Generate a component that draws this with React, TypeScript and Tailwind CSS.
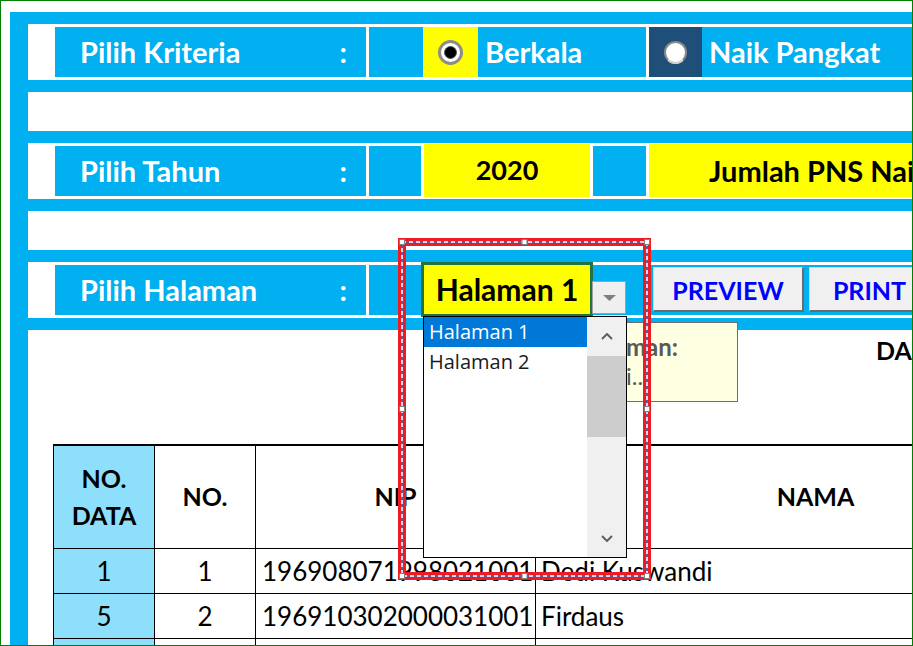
import React from "react";

const BLUE = "bg-[#00b0f0]";

function LabelCell({ label }: { label: string }) {
  return (
    <div className={`w-[311px] shrink-0 ${BLUE} flex items-center justify-between pl-[25px] pr-[19px] text-white font-bold text-[29px]`}>
      <span>{label}</span>
      <span>:</span>
    </div>
  );
}

function LabelGroup({ label }: { label: string }) {
  return (
    <div className="flex shrink-0 border-[3px] border-white">
      <LabelCell label={label} />
      <div className="w-[3px] bg-white" />
      <div className={`w-[52px] ${BLUE}`} />
    </div>
  );
}

function Band() {
  return <div className={`h-[12px] shrink-0 ${BLUE}`} />;
}

function Chevron({ up }: { up?: boolean }) {
  return (
    <svg width="12" height="7" viewBox="0 0 12 7">
      <polyline
        points={up ? "1,6 6,1 11,6" : "1,1 6,6 11,1"}
        fill="none"
        stroke="#606060"
        strokeWidth="2"
      />
    </svg>
  );
}

const rows = [
  { data: "1", no: "1", nip: "196908071998021001", nama: "Dedi Kuswandi" },
  { data: "5", no: "2", nip: "196910302000031001", nama: "Firdaus" },
  { data: "", no: "", nip: "", nama: "" },
];

const handles: [number, number][] = [
  [5, 5], [127.5, 5], [250, 5],
  [5, 172], [250, 172],
  [5, 339], [127.5, 339], [250, 339],
];

export default function App() {
  return (
    <div className="w-[913px] h-[646px] border border-[#008000] bg-white font-['Lato',sans-serif] text-black">
      <div className="relative w-full h-full overflow-hidden">
        <div className="flex h-full pt-[11px] pl-[9px]">
          <div className={`w-[18px] shrink-0 ${BLUE}`} />
          <div className="flex-1 min-w-0 flex flex-col">
            <Band />

            {/* Pilih Kriteria */}
            <div className="flex h-[56px] shrink-0">
              <div className="w-[24px] shrink-0" />
              <div className="flex shrink-0 border-[3px] border-white">
                <LabelCell label="Pilih Kriteria" />
                <div className="w-[3px] bg-white" />
                <div className={`w-[54px] ${BLUE}`} />
                <div className="w-[55px] bg-[#ffff00] flex items-center justify-center">
                  <div className="w-[25px] h-[25px] rounded-full border-[3px] border-[#8c8c8c] bg-white flex items-center justify-center">
                    <div className="w-[13px] h-[13px] rounded-full bg-black border border-[#555]" />
                  </div>
                </div>
                <div className={`w-[168px] ${BLUE} flex items-center pl-[7px] text-white font-bold text-[29px]`}>
                  Berkala
                </div>
              </div>
              <div className="flex flex-1 min-w-0 border-y-[3px] border-white">
                <div className="w-[53px] shrink-0 bg-[#1f4e79] flex items-center justify-center">
                  <div className="w-[23px] h-[23px] rounded-full border-2 border-[#8a8a8a] border-b-[#d0d0d0] bg-white" />
                </div>
                <div className={`flex-1 ${BLUE} flex items-center pl-[7px] text-white font-bold text-[29px] whitespace-nowrap`}>
                  Naik Pangkat
                </div>
              </div>
            </div>

            <Band />
            <div className="h-[39px] shrink-0" />
            <Band />

            {/* Pilih Tahun */}
            <div className="flex h-[56px] shrink-0">
              <div className="w-[24px] shrink-0" />
              <LabelGroup label="Pilih Tahun" />
              <div className="w-[166px] shrink-0 mt-px mb-[2px] bg-[#ffff00] flex items-center justify-center font-bold text-[27px]">
                2020
              </div>
              <div className={`w-[59px] shrink-0 border-[3px] border-white ${BLUE}`} />
              <div className="flex-1 min-w-0 mt-px mb-[2px] bg-[#ffff00] flex items-center pl-[60px] font-bold text-[29px] whitespace-nowrap overflow-hidden">
                Jumlah PNS Naik Gaji Berkala
              </div>
            </div>

            <Band />
            <div className="h-[39px] shrink-0" />
            <Band />

            {/* Pilih Halaman */}
            <div className="flex h-[56px] shrink-0">
              <div className="w-[24px] shrink-0" />
              <LabelGroup label="Pilih Halaman" />
              <div className={`flex flex-1 min-w-0 border-y-[3px] border-white ${BLUE} pl-[229px] gap-[5px]`}>
                <button className="w-[151px] h-[45px] mt-[2px] pt-[3px] shrink-0 bg-[#f0f0f0] border-t border-l border-[#d4d4d4] border-r-2 border-b-2 border-r-[#6b6b6b] border-b-[#6b6b6b] text-[#0000ff] font-bold text-[25px]">
                  PREVIEW
                </button>
                <button className="w-[122px] h-[45px] mt-[2px] pt-[3px] shrink-0 bg-[#f0f0f0] border-t border-l border-[#d4d4d4] border-r-2 border-b-2 border-r-[#6b6b6b] border-b-[#6b6b6b] text-[#0000ff] font-bold text-[25px]">
                  PRINT
                </button>
              </div>
            </div>

            <Band />

            {/* title */}
            <div className="h-[114px] shrink-0 pl-[848px] pt-[5px] font-bold text-[25px] leading-[30px] whitespace-nowrap">
              DAFTAR PNS NAIK GAJI BERKALA
            </div>

            {/* table */}
            <div className="ml-[25px] grid grid-cols-[101px_101px_280px_560px] border-t-2 border-l border-black w-max">
              <div className="h-[103px] bg-[#8ddffc] border-r border-b border-black flex items-center justify-center text-center font-bold text-[25px] leading-[37px]">
                NO.<br />DATA
              </div>
              <div className="h-[103px] border-r border-b border-black flex items-center justify-center font-bold text-[25px]">
                NO.
              </div>
              <div className="h-[103px] border-r border-b border-black flex items-center justify-center font-bold text-[25px]">
                NIP
              </div>
              <div className="h-[103px] border-r border-b border-black flex items-center justify-center font-bold text-[25px]">
                NAMA
              </div>
              {rows.map((r, i) => (
                <React.Fragment key={i}>
                  <div className="h-[45px] bg-[#8ddffc] border-r border-b border-black flex items-center justify-center text-[26px]">
                    {r.data}
                  </div>
                  <div className="h-[45px] border-r border-b border-black flex items-center justify-center text-[26px]">
                    {r.no}
                  </div>
                  <div className="h-[45px] border-r border-b border-black flex items-center pl-[6px] text-[26px]">
                    {r.nip}
                  </div>
                  <div className="h-[45px] border-r border-b border-black flex items-center pl-[5px] text-[26px]">
                    {r.nama}
                  </div>
                </React.Fragment>
              ))}
            </div>
          </div>
        </div>

        {/* input message tooltip */}
        <div className="absolute left-[598px] top-[321px] w-[139px] h-[80px] bg-[#ffffe1] border border-[#6e6e6e] pl-[26px] pt-[9px] text-[#595959] leading-[29px]">
          <div className="font-bold text-[24px]">man:</div>
          <div className="text-[24px]">i..</div>
        </div>

        {/* combo box */}
        <div className="absolute left-[420px] top-[261px] w-[172px] h-[55px] border-[3px] border-[#217346] bg-[#ffff00] flex items-center justify-center font-bold text-[30px]">
          Halaman 1
        </div>
        <div className="absolute left-[591px] top-[280px] w-[34px] h-[33px] bg-[#efefef] border border-[#a0a0a0] flex items-center justify-center">
          <svg width="13" height="6" viewBox="0 0 13 6">
            <polygon points="0,0 13,0 6.5,6" fill="#7f7f7f" />
          </svg>
        </div>

        {/* list box */}
        <div className="absolute left-[422px] top-[315px] w-[204px] h-[242px] border border-black bg-white flex font-['Open_Sans',sans-serif] text-[20px]">
          <div className="flex-1 flex flex-col">
            <div className="h-[30px] bg-[#0078d7] text-white flex items-center pl-[5px]">Halaman 1</div>
            <div className="h-[30px] flex items-center pl-[5px] text-[#1a1a1a]">Halaman 2</div>
          </div>
          <div className="w-[39px] flex flex-col bg-[#f0f0f0]">
            <div className="h-[39px] flex items-center justify-center">
              <Chevron up />
            </div>
            <div className="h-[81px] bg-[#cdcdcd]" />
            <div className="flex-1" />
            <div className="h-[38px] flex items-center justify-center">
              <Chevron />
            </div>
          </div>
        </div>

        {/* selection frame */}
        <svg className="absolute left-[396px] top-[236px]" width="254" height="344" viewBox="0 0 254 344">
          <rect x="5" y="5" width="245" height="334" fill="none" stroke="#ed1c24" strokeWidth="8" />
          <rect x="5" y="5" width="245" height="334" fill="none" stroke="#2e6fc0" strokeWidth="1.5" />
          <rect x="5" y="5" width="245" height="334" fill="none" stroke="#ffffff" strokeWidth="1.5" strokeDasharray="4 3" />
          {handles.map(([x, y], i) => (
            <rect key={i} x={x - 2.5} y={y - 2.5} width="5" height="5" fill="#ffffff" stroke="#7f7f7f" strokeWidth="1" />
          ))}
        </svg>
      </div>
    </div>
  );
}
